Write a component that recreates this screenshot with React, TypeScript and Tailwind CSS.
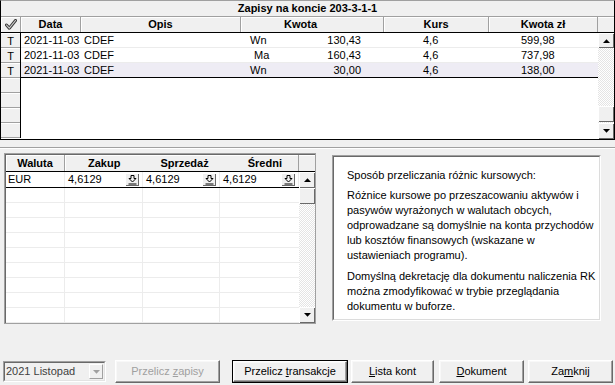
import React from 'react';

const raised = 'shadow-[inset_1px_1px_#ffffff,inset_-1px_-1px_#696969]';
const checker =
  'bg-[image:repeating-conic-gradient(#ffffff_0_25%,#e4e4e4_0_50%)] bg-[length:2px_2px]';

const Arrow: React.FC<{ dir: 'up' | 'down'; color?: string }> = ({ dir, color = '#000' }) => (
  <svg width="7" height="4" viewBox="0 0 7 4">
    <path d={dir === 'up' ? 'M0 4 L3.5 0.2 L7 4 Z' : 'M0 0 L7 0 L3.5 3.8 Z'} fill={color} />
  </svg>
);

const ScrollButton: React.FC<{ dir: 'up' | 'down'; h: string }> = ({ dir, h }) => (
  <div className={`${h} w-[16px] bg-[#f0f0f0] ${raised} flex items-center justify-center`}>
    <Arrow dir={dir} />
  </div>
);

const PickIcon: React.FC = () => (
  <svg width="9" height="10" viewBox="0 0 9 10">
    <path d="M3 0.5 H6 V3.5 H8 L4.5 7 L1 3.5 H3 Z" fill="none" stroke="#000" strokeWidth="1" />
    <path d="M0.5 9 H8.5" stroke="#000" strokeWidth="1" />
  </svg>
);

const rows = [
  { date: '2021-11-03', opis: 'CDEF', side: 'Wn', kwota: '130,43', kurs: '4,6', pln: '599,98' },
  { date: '2021-11-03', opis: 'CDEF', side: 'Ma', kwota: '160,43', kurs: '4,6', pln: '737,98' },
  { date: '2021-11-03', opis: 'CDEF', side: 'Wn', kwota: '30,00', kurs: '4,6', pln: '138,00' },
];

const headSep = 'border-r border-[#a0a0a0] shadow-[inset_1px_0_#ffffff]';

const TopGrid: React.FC = () => (
  <div className="h-[140px] border border-black border-t-[#a0a0a0] flex flex-col">
    <div className="h-[16px] border-b border-[#a0a0a0] flex items-center justify-center font-bold">
      Zapisy na koncie 203-3-1-1
    </div>
    <div className="h-[16px] border-b border-black flex font-bold shadow-[inset_0_1px_#ffffff]">
      <div className={`w-[20px] ${headSep} flex items-center justify-center`}>
        <svg width="12" height="11" viewBox="0 0 12 11">
          <path d="M1.5 6 L4.3 9.2 L10.5 1.5" fill="none" stroke="#3a3a3a" strokeWidth="3" strokeLinecap="round" strokeLinejoin="round" />
          <path d="M1.5 6 L4.3 9.2 L10.5 1.5" fill="none" stroke="#cfcfcf" strokeWidth="1.1" strokeLinecap="round" strokeLinejoin="round" />
        </svg>
      </div>
      <div className={`w-[60px] ${headSep} flex items-center justify-center`}>Data</div>
      <div className={`w-[160px] ${headSep} flex items-center justify-center`}>Opis</div>
      <div className={`w-[143px] ${headSep} flex items-center pl-[43px]`}>Kwota</div>
      <div className={`w-[105px] ${headSep} flex items-center justify-center`}>Kurs</div>
      <div className={`w-[109px] ${headSep} flex items-center justify-center`}>Kwota zł</div>
      <div className="flex-1" />
    </div>
    <div className="flex flex-1 min-h-0">
      <div className="w-[597px] flex flex-col bg-white">
        {rows.map((r, i) => {
          const last = i === rows.length - 1;
          return (
            <div key={i} className={`h-[15px] flex leading-[14px] ${last ? 'bg-[#eeecf4]' : ''}`}>
              <div className="w-[20px] h-full bg-[#f0f0f0] border-r border-black shadow-[inset_0_1px_#ffffff,inset_0_-1px_#a0a0a0] flex items-center justify-center">
                T
              </div>
              <div className={`flex flex-1 border-b ${last ? 'border-black' : 'border-[#ececec]'}`}>
                <div className="w-[60px] pl-[3px]">{r.date}</div>
                <div className="w-[160px] pl-[3px]">{r.opis}</div>
                <div className="w-[143px] flex">
                  <span className={r.side === 'Ma' ? 'pl-[13px]' : 'pl-[9px]'}>{r.side}</span>
                  <span className="flex-1 text-right pr-[23px]">{r.kwota}</span>
                </div>
                <div className="w-[105px] pl-[39px]">{r.kurs}</div>
                <div className="w-[109px] pl-[32px]">{r.pln}</div>
              </div>
            </div>
          );
        })}
        {[0, 1, 2, 3].map((i) => (
          <div key={i} className="h-[15px] flex">
            <div className="w-[20px] h-full bg-[#f0f0f0] border-r border-black shadow-[inset_0_1px_#ffffff,inset_0_-1px_#a0a0a0]" />
          </div>
        ))}
      </div>
      <div className="w-[16px] flex flex-col">
        <ScrollButton dir="up" h="h-[15px]" />
        <div className={`flex-1 flex flex-col justify-end pb-[1px] ${checker}`}>
          <div className={`h-[16px] bg-[#f0f0f0] ${raised}`} />
        </div>
        <ScrollButton dir="down" h="h-[16px]" />
      </div>
    </div>
  </div>
);

const RateCell: React.FC<{ w: string }> = ({ w }) => (
  <div className={`${w} h-full border-r border-[#ececec] flex items-center pl-[3px] pr-[3px]`}>
    <span className="flex-1">4,6129</span>
    <div className={`w-[14px] h-[13px] bg-[#f0f0f0] ${raised} flex items-center justify-center`}>
      <PickIcon />
    </div>
  </div>
);

const RatesGrid: React.FC = () => (
  <div className="ml-[4px] w-[312px] h-[171px] border border-[#a0a0a0]">
    <div className="h-full border-l border-t border-[#696969] flex flex-col">
      <div className="h-[17px] border-b border-black flex font-bold shadow-[inset_0_1px_#ffffff]">
        <div className={`w-[59px] ${headSep} flex items-center justify-center`}>Waluta</div>
        <div className={`w-[234px] ${headSep} flex items-center`}>
          <span className="ml-[23px]">Zakup</span>
          <span className="ml-[40px]">Sprzedaż</span>
          <span className="ml-[39px]">Średni</span>
        </div>
        <div className="flex-1" />
      </div>
      <div className="flex flex-1 min-h-0">
        <div className="w-[293px] flex flex-col bg-white overflow-hidden">
          <div className="h-[16px] shrink-0 border-b border-black flex">
            <div className="w-[59px] h-full border-r border-[#ececec] pl-[2px] flex items-center">EUR</div>
            <RateCell w="w-[78px]" />
            <RateCell w="w-[77px]" />
            <RateCell w="w-[79px]" />
          </div>
          {[0, 1, 2, 3, 4, 5, 6, 7, 8, 9].map((i) => (
            <div key={i} className="h-[15px] shrink-0 border-b border-[#ececec] flex">
              <div className="w-[59px] border-r border-[#ececec]" />
              <div className="w-[78px] border-r border-[#ececec]" />
              <div className="w-[77px] border-r border-[#ececec]" />
              <div className="w-[79px]" />
            </div>
          ))}
        </div>
        <div className="w-[16px] flex flex-col">
          <ScrollButton dir="up" h="h-[16px]" />
          <div className={`flex-1 flex flex-col ${checker}`}>
            <div className={`h-[16px] bg-[#f0f0f0] ${raised}`} />
          </div>
          <ScrollButton dir="down" h="h-[16px]" />
        </div>
      </div>
    </div>
  </div>
);

const InfoPanel: React.FC = () => (
  <div className="ml-[16px] mt-[2px] w-[269px] h-[166px] border border-t-[#a0a0a0] border-l-[#a0a0a0] border-r-white border-b-white">
    <div className="h-full border border-t-[#696969] border-l-[#696969] border-r-[#dcdcdc] border-b-[#dcdcdc] bg-white pl-[13px] pt-[11px] leading-[15px] whitespace-nowrap">
      <p>Sposób przeliczania różnic kursowych:</p>
      <p className="mt-[5px]">
        Różnice kursowe po przeszacowaniu aktywów i<br />
        pasywów wyrażonych w walutach obcych,<br />
        odprowadzane są domyślnie na konta przychodów<br />
        lub kosztów finansowych (wskazane w<br />
        ustawieniach programu).
      </p>
      <p className="mt-[6px]">
        Domyślną dekretację dla dokumentu naliczenia RK<br />
        można zmodyfikować w trybie przeglądania<br />
        dokumentu w buforze.
      </p>
    </div>
  </div>
);

const btn =
  'h-[23px] bg-[#f0f0f0] border border-t-white border-l-white border-r-[#696969] border-b-[#696969] shadow-[inset_-1px_-1px_#a0a0a0,inset_1px_1px_#f8f8f8] flex items-center justify-center';

const App: React.FC = () => (
  <div className="w-[615px] h-[385px] bg-[#f0f0f0] overflow-hidden flex flex-col text-[11px] text-black font-['Liberation_Sans',Arial,sans-serif]">
    <TopGrid />
    <div className="mt-[7px] h-[2px] border-t border-[#a0a0a0] border-b border-b-white" />
    <div className="mt-[4px] h-[171px] flex items-start">
      <RatesGrid />
      <InfoPanel />
    </div>
    <div className="mt-[36px] flex items-start">
      <div className="ml-[3px] mt-[1px] w-[103px] h-[21px] border border-t-[#a0a0a0] border-l-[#a0a0a0] border-r-white border-b-white">
        <div className="h-full border border-t-[#696969] border-l-[#696969] border-r-[#e3e3e3] border-b-[#e3e3e3] flex items-center pl-[1px] pr-[1px]">
          <span className="flex-1 text-[#404040]">2021 Listopad</span>
          <div className="w-[14px] h-[15px] border border-t-[#ffffff] border-l-[#ffffff] border-r-[#a0a0a0] border-b-[#a0a0a0] flex items-center justify-center">
            <Arrow dir="down" color="#a0a0a0" />
          </div>
        </div>
      </div>
      <div className={`ml-[9px] w-[105px] ${btn} text-[#a0a0a0]`}>
        <span>
          Przelicz <span className="underline">z</span>apisy
        </span>
      </div>
      <div className="ml-[12px] w-[116px] h-[23px] border border-black">
        <div className={`w-full h-full ${btn.replace('h-[23px] ', '')}`}>
          <span>
            Przelicz <span className="underline">t</span>ransakcje
          </span>
        </div>
      </div>
      <div className={`ml-[3px] w-[83px] ${btn}`}>
        <span>
          <span className="underline">L</span>ista kont
        </span>
      </div>
      <div className={`ml-[5px] w-[85px] ${btn}`}>
        <span>
          <span className="underline">D</span>okument
        </span>
      </div>
      <div className={`ml-[4px] w-[85px] ${btn}`}>
        <span>
          Za<span className="underline">m</span>knij
        </span>
      </div>
    </div>
  </div>
);

export default App;
